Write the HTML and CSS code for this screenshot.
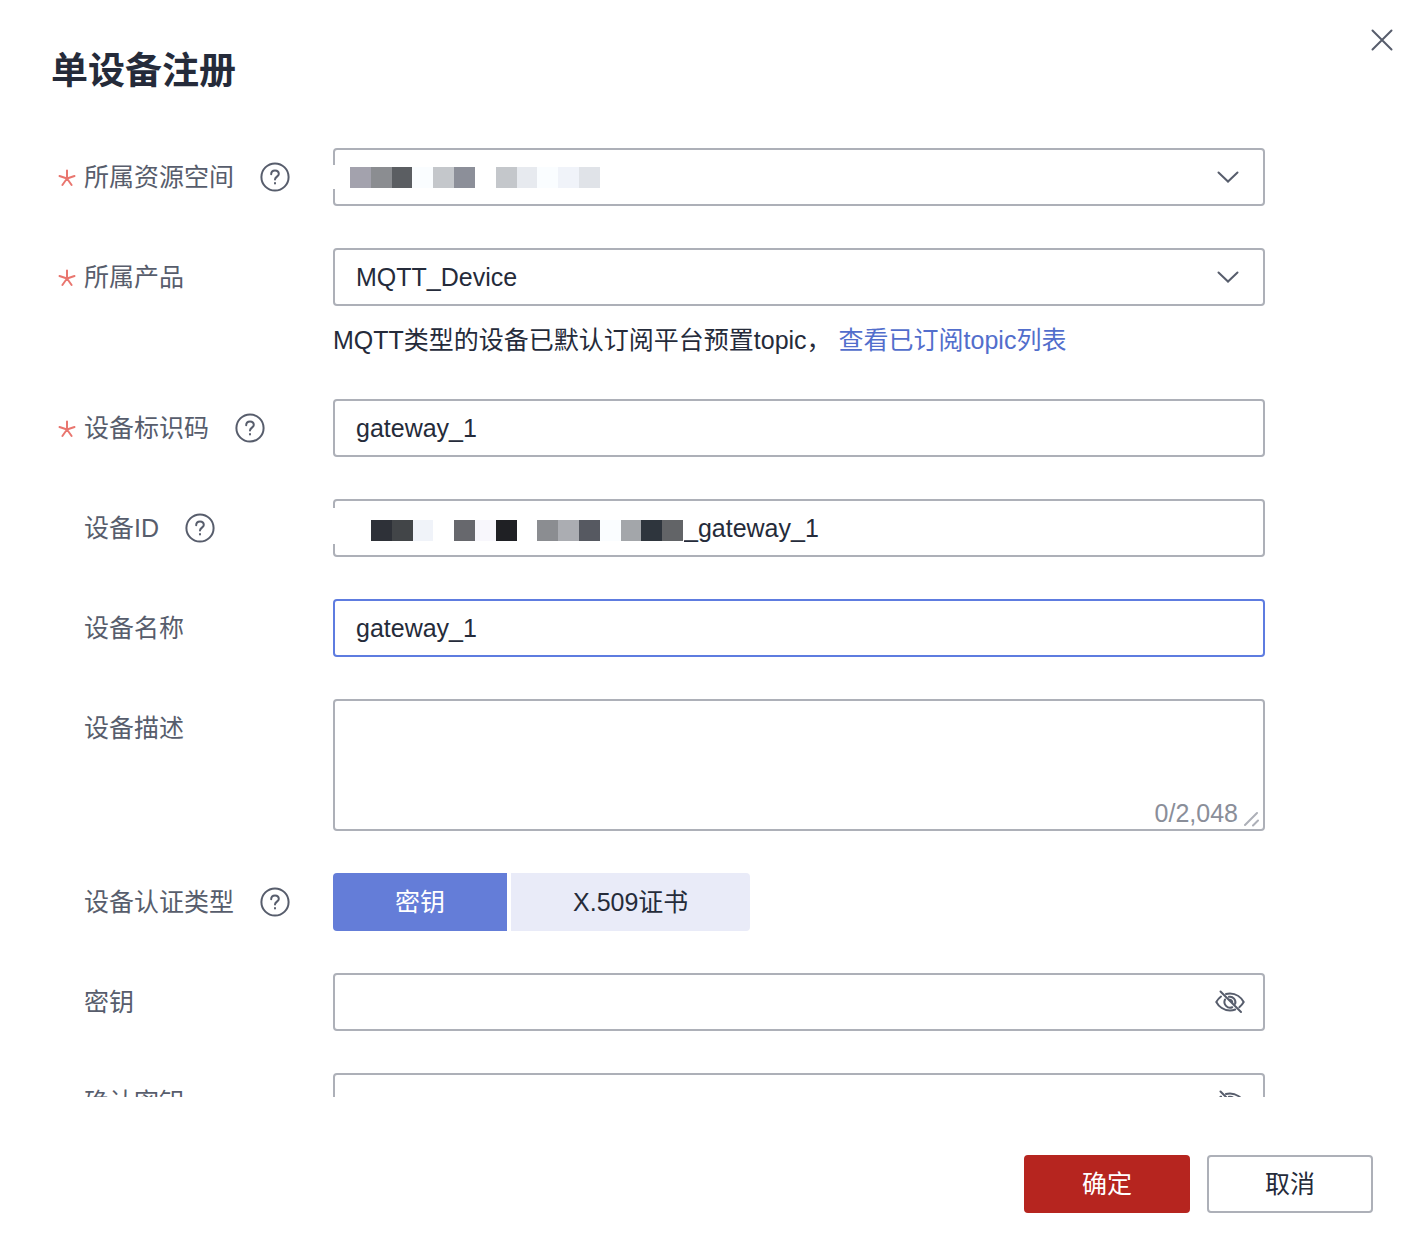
FILE: index.html
```html
<!DOCTYPE html>
<html lang="zh-CN">
<head>
  <meta charset="UTF-8" />
  <title>单设备注册</title>
  <link rel="stylesheet" href="styles.css">
</head>
<body>
  <svg class="sprite" aria-hidden="true">
    <symbol id="icon-star" viewBox="0 0 18 18">
      <path d="M9 9.500V1.500M9 9.500L1.500 7M9 9.500l7.500-2.500M9 9.500l-4.600 6.500M9 9.500l4.600 6.500" />
    </symbol>
    <symbol id="icon-help" viewBox="0 0 30 30">
      <circle cx="15" cy="15" r="13.6" />
      <path d="M11.200 12.200c0-2.300 1.600-3.800 3.800-3.800s3.800 1.500 3.800 3.500c0 2.500-3.800 3-3.800 5.600M15 21v.6" />
    </symbol>
    <symbol id="icon-arrow" viewBox="0 0 24 14">
      <path d="M2.500 2.500L12 11.500l9.500-9" />
    </symbol>
    <symbol id="icon-eye" viewBox="0 0 30 24">
      <path d="M6 6.500C3.800 8.200 2.200 10.300 1.300 12c2.400 4.600 7.600 8.500 13.700 8.500 1.900 0 3.600-.3 5.200-1M11 4c1.300-.4 2.600-.5 4-.5 6.100 0 11.300 3.900 13.700 8.500-.9 1.700-2.400 3.600-4.400 5.200" />
      <path d="M10 9.500a5.700 5.700 0 0 0 7.300 7.700M14 6.800a5.500 5.500 0 0 1 6.200 7M14.500 9.800a2.600 2.600 0 0 1 2.800 2.600M5.500 1.500l20.500 20.500" />
    </symbol>
  </svg>

  <div class="dialog" role="dialog" aria-labelledby="title">
    <header class="header">
      <h1 class="title" id="title">单设备注册</h1>
      <button type="button" class="close" aria-label="关闭">
        <svg viewBox="0 0 22 22"><path d="M1.500 1.500l19 19M20.500 1.500l-19 19" /></svg>
      </button>
    </header>

    <form class="form" id="deviceForm">
      <div class="row">
        <div class="label">
          <svg class="star"><use href="#icon-star" /></svg>
          <label for="space">所属资源空间</label>
          <button type="button" class="help" aria-label="帮助"><svg><use href="#icon-help" /></svg></button>
        </div>
        <div class="control">
          <select class="field" id="space" required>
            <option value=""></option>
          </select>
          <svg class="arrow"><use href="#icon-arrow" /></svg>
          <div class="mask mask-space">
            <i class="c1"></i><i class="c2"></i><i class="c3"></i><i class="c4"></i><i class="c5"></i><i class="c6"></i>
            <i></i><i class="c5"></i><i class="c7"></i><i class="c4"></i><i class="c8"></i><i class="c9"></i>
          </div>
        </div>
      </div>

      <div class="row">
        <div class="label">
          <svg class="star"><use href="#icon-star" /></svg>
          <label for="product">所属产品</label>
        </div>
        <div class="control">
          <select class="field" id="product" required>
            <option>MQTT_Device</option>
          </select>
          <svg class="arrow"><use href="#icon-arrow" /></svg>
          <p class="hint">MQTT类型的设备已默认订阅平台预置topic， <a href="#topics">查看已订阅topic列表</a></p>
        </div>
      </div>

      <div class="row">
        <div class="label">
          <svg class="star"><use href="#icon-star" /></svg>
          <label for="code">设备标识码</label>
          <button type="button" class="help" aria-label="帮助"><svg><use href="#icon-help" /></svg></button>
        </div>
        <div class="control">
          <input class="field" type="text" id="code" value="gateway_1" required>
        </div>
      </div>

      <div class="row">
        <div class="label">
          <label for="deviceId">设备ID</label>
          <button type="button" class="help" aria-label="帮助"><svg><use href="#icon-help" /></svg></button>
        </div>
        <div class="control">
          <input class="field field-id" type="text" id="deviceId" value="_gateway_1">
          <div class="mask mask-id">
            <i class="d1"></i><i class="d2"></i><i class="c8"></i><i></i><i class="d3"></i>
            <i class="d4"></i><i class="d5"></i><i></i><i class="c2"></i><i class="d6"></i>
            <i class="d7"></i><i class="c4"></i><i class="d8"></i><i class="d9"></i><i class="d10"></i>
          </div>
        </div>
      </div>

      <div class="row">
        <div class="label"><label for="name">设备名称</label></div>
        <div class="control">
          <input class="field active" type="text" id="name" value="gateway_1">
        </div>
      </div>

      <div class="row">
        <div class="label"><label for="desc">设备描述</label></div>
        <div class="control">
          <textarea class="field area" id="desc" maxlength="2048"></textarea>
          <span class="count">0/2,048</span>
          <svg class="grip" viewBox="0 0 16 16"><path d="M2 14L14 2M10 14.500l5-5" /></svg>
        </div>
      </div>

      <div class="row">
        <div class="label">
          <span id="authLabel">设备认证类型</span>
          <button type="button" class="help" aria-label="帮助"><svg><use href="#icon-help" /></svg></button>
        </div>
        <div class="control tabs" role="group" aria-labelledby="authLabel">
          <button type="button" class="tab selected" aria-pressed="true">密钥</button>
          <button type="button" class="tab" aria-pressed="false">X.509证书</button>
        </div>
      </div>

      <div class="row">
        <div class="label"><label for="secret">密钥</label></div>
        <div class="control">
          <input class="field" type="password" id="secret">
          <button type="button" class="eye" aria-label="显示密钥"><svg><use href="#icon-eye" /></svg></button>
        </div>
      </div>

      <div class="row">
        <div class="label"><label for="confirm">确认密钥</label></div>
        <div class="control">
          <input class="field" type="password" id="confirm">
          <button type="button" class="eye" aria-label="显示密钥"><svg><use href="#icon-eye" /></svg></button>
        </div>
      </div>
    </form>

    <footer class="footer">
      <button type="submit" form="deviceForm" class="btn primary">确定</button>
      <button type="button" class="btn">取消</button>
    </footer>
  </div>
</body>
</html>
```

FILE: styles.css
```css
* {
  box-sizing: border-box;
}

body {
  margin: 0;
  background: #fff;
  color: #252b3a;
  font-family: "Liberation Sans", "Noto Sans CJK SC", sans-serif;
  font-size: 25px;
  line-height: 34px;
}

button,
input,
select,
textarea {
  font: inherit;
  color: inherit;
}

button {
  padding: 0;
  border: none;
  background: none;
  cursor: pointer;
}

svg {
  display: block;
  fill: none;
  stroke: #575d6c;
  stroke-width: 2;
  stroke-linecap: round;
}

.sprite {
  position: absolute;
  width: 0;
  height: 0;
}

.dialog {
  display: flex;
  flex-direction: column;
  height: 100vh;
}

/* header */
.header {
  display: flex;
  justify-content: space-between;
  align-items: flex-start;
  padding: 24px 10px 52px 51px;
}

.title {
  margin: 24px 0 0;
  font-size: 37px;
  line-height: 48px;
}

.close {
  display: flex;
  justify-content: center;
  align-items: center;
  width: 32px;
  height: 32px;
}

.close svg {
  width: 22px;
  height: 22px;
}

/* form */
.form {
  flex: 1;
  display: flex;
  flex-direction: column;
  gap: 42px;
  min-height: 0;
  padding: 0 143px 0 51px;
  overflow-y: auto;
  scrollbar-width: none;
}

.row {
  display: flex;
  flex-shrink: 0;
}

.label {
  position: relative;
  display: flex;
  align-items: center;
  gap: 26px;
  width: 282px;
  height: 58px;
  padding-left: 33px;
  color: #575d6c;
}

.star {
  position: absolute;
  left: 7px;
  top: 21px;
  width: 18px;
  height: 18px;
  stroke: #e9766f;
}

.help,
.help svg {
  width: 30px;
  height: 30px;
}

.control {
  position: relative;
  flex: 1;
}

.field {
  display: block;
  width: 100%;
  height: 58px;
  padding: 0 21px;
  border: 2px solid #adb0b8;
  border-radius: 4px;
  background: #fff;
  outline: none;
  appearance: none;
}

.active {
  border-color: #5e7ce0;
}

.area {
  height: 132px;
  padding: 12px 21px;
  resize: none;
}

.field-id {
  padding-left: 349px;
}

.arrow {
  position: absolute;
  right: 25px;
  top: 22px;
  width: 24px;
  height: 14px;
  pointer-events: none;
}

.eye {
  position: absolute;
  right: 20px;
  top: 17px;
}

.eye svg {
  width: 30px;
  height: 24px;
}

.hint {
  margin: 17px 0 0;
}

.hint a {
  color: #526ecc;
  text-decoration: none;
}

.count {
  position: absolute;
  right: 27px;
  bottom: 1px;
  color: #8a8e99;
}

.grip {
  position: absolute;
  right: 6px;
  bottom: 4px;
  width: 16px;
  height: 16px;
  stroke: #adb0b8;
}

/* hidden values */
.mask {
  position: absolute;
  left: 0;
  display: flex;
  align-items: center;
  background: #fff;
}

.mask i {
  flex: 1;
  height: 21px;
}

.mask-space {
  top: 17px;
  width: 267px;
  height: 24px;
  padding-left: 17px;
}

.mask-id {
  top: 9px;
  width: 350px;
  height: 36px;
  padding: 8px 0 0 38px;
}

.c1 { background: #a3a2ad; }
.c2 { background: #8b8d91; }
.c3 { background: #5b5e62; }
.c4 { background: #fafdff; }
.c5 { background: #c4c7cb; }
.c6 { background: #8c8f99; }
.c7 { background: #e7eaef; }
.c8 { background: #f0f3f9; }
.c9 { background: #e0e3e8; }
.d1 { background: #2e3138; }
.d2 { background: #424548; }
.d3 { background: #67686d; }
.d4 { background: #f8f7fc; }
.d5 { background: #1f2024; }
.d6 { background: #abadb2; }
.d7 { background: #565961; }
.d8 { background: #a3a6aa; }
.d9 { background: #2e353d; }
.d10 { background: #626467; }

/* auth type */
.tabs {
  display: flex;
  gap: 4px;
}

.tab {
  height: 58px;
  padding: 0 62px;
  border-radius: 0 4px 4px 0;
  background: #e9ebf8;
}

.tab.selected {
  border-radius: 4px 0 0 4px;
  background: #647dd8;
  color: #fff;
}

/* footer */
.footer {
  display: flex;
  justify-content: flex-end;
  gap: 17px;
  padding: 58px 35px 27px;
}

.btn {
  width: 166px;
  height: 58px;
  border: 2px solid #adb0b8;
  border-radius: 4px;
}

.primary {
  border-color: #b6251f;
  background: #b6251f;
  color: #fff;
}
```
